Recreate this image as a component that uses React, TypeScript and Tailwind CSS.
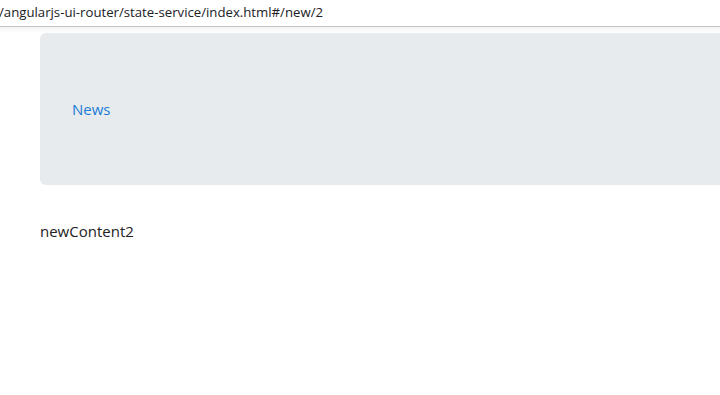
export default function App() {
  return (
    <div className="w-[720px] h-[395px] overflow-hidden bg-white" style={{ fontFamily: '"Open Sans", "Noto Sans", sans-serif' }}>
      {/* Address bar */}
      <div className="h-[27px] border-b border-[#c4c4c4] bg-white flex items-center">
        <span className="text-[13.2px] leading-none text-[#202124] -ml-[1px]">/angularjs-ui-router/state-service/index.html#/new/2</span>
      </div>
      <div className="h-[6px] bg-gradient-to-b from-[#f4f4f4] to-white" />

      {/* Jumbotron */}
      <div className="ml-[40px] w-[720px] h-[152px] rounded-[6px] bg-[#e8ebee] pl-[32px] flex items-center">
        <a className="text-[15px] text-[#1a7bd6] mt-[1px]">News</a>
      </div>

      <div className="ml-[40px] mt-[35px] text-[15px] text-[#222]">newContent2</div>
    </div>
  );
}
